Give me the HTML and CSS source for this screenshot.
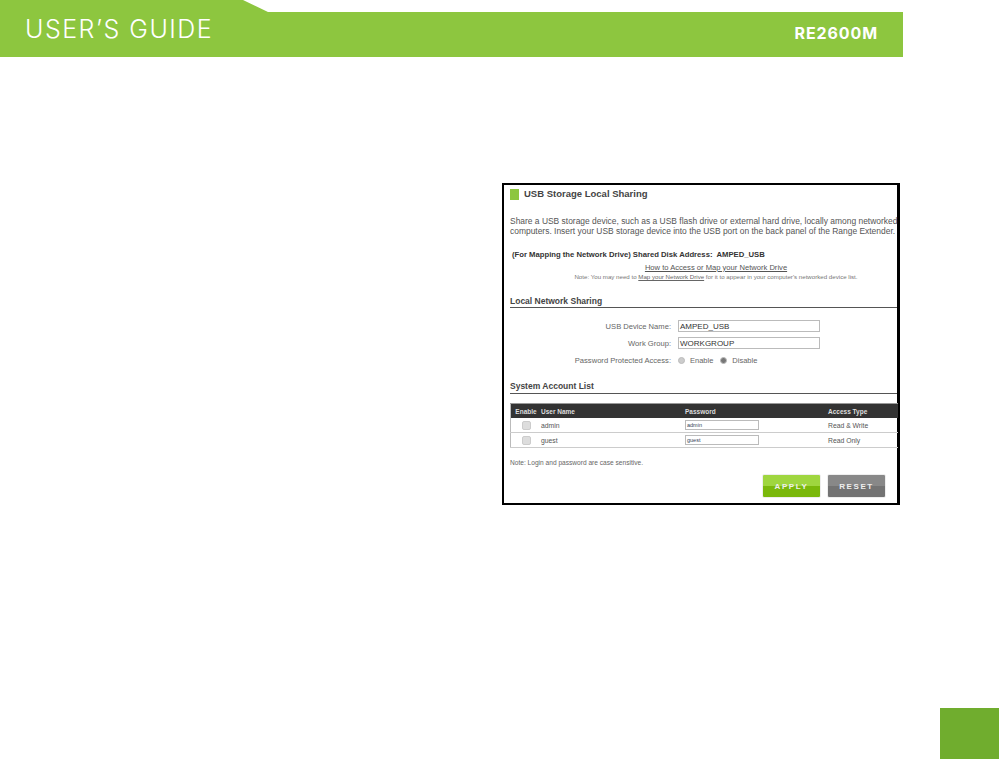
FILE: index.html
```html
<!DOCTYPE html>
<html lang="en">
<head>
    <meta charset="UTF-8">
    <meta name="viewport" content="width=device-width, initial-scale=1.0">
    <title>User's Guide RE2600M</title>
    <link rel="stylesheet" href="styles.css">
</head>
<body>
    <div class="header">
        <div class="guide">USER’S GUIDE</div>
        <div class="model">RE2600M</div>
    </div>

    <div class="shot">
        <h1 class="title"><span class="mark"></span>USB Storage Local Sharing</h1>
        <p class="intro">Share a USB storage device, such as a USB flash drive or external hard drive, locally among networked<br>computers. Insert your USB storage device into the USB port on the back panel of the Range Extender.</p>
        <p class="address">(For Mapping the Network Drive) Shared Disk Address:&nbsp; AMPED_USB</p>
        <div class="howto">
            <a href="#">How to Access or Map your Network Drive</a>
            <small>Note: You may need to <a href="#">Map your Network Drive</a> for it to appear in your computer's networked device list.</small>
        </div>

        <h2 class="section first">Local Network Sharing</h2>
        <div class="fields">
            <label>USB Device Name:</label>
            <div class="box">AMPED_USB</div>
            <label>Work Group:</label>
            <div class="box">WORKGROUP</div>
            <label>Password Protected Access:</label>
            <div class="radios">
                <span class="radio"></span><span>Enable</span>
                <span class="radio on"></span><span>Disable</span>
            </div>
        </div>

        <h2 class="section second">System Account List</h2>
        <table class="accounts">
            <tr>
                <th>Enable</th>
                <th>User Name</th>
                <th>Password</th>
                <th>Access Type</th>
            </tr>
            <tr>
                <td><span class="check"></span></td>
                <td>admin</td>
                <td><div class="pass">admin</div></td>
                <td>Read &amp; Write</td>
            </tr>
            <tr>
                <td><span class="check"></span></td>
                <td>guest</td>
                <td><div class="pass">guest</div></td>
                <td>Read Only</td>
            </tr>
        </table>
        <p class="note">Note: Login and password are case sensitive.</p>
        <div class="actions">
            <button class="apply">APPLY</button>
            <button class="reset">RESET</button>
        </div>
    </div>

    <div class="corner"></div>
</body>
</html>
```

FILE: styles.css
```css
body {
    margin: 0;
    width: 999px;
    height: 759px;
    overflow: hidden;
    display: flex;
    flex-direction: column;
    background-color: white;
    font-family: "Liberation Sans", Arial, sans-serif;
    color: #444;
}

.header {
    width: 903px;
    height: 57px;
    box-sizing: border-box;
    padding: 18px 25px 0 25px;
    display: flex;
    justify-content: space-between;
    background-color: #8DC63F;
    color: white;
    clip-path: polygon(0 0, 243px 0, 268px 12px, 100% 12px, 100% 100%, 0 100%);
}

.guide {
    font-family: "Inter", sans-serif;
    font-size: 25px;
    font-weight: 300;
    line-height: 22px;
    letter-spacing: 1.5px;
}

.model {
    font-family: "Inter", sans-serif;
    font-size: 16px;
    font-weight: 700;
    line-height: 15px;
    margin-top: 8px;
    letter-spacing: 0.9px;
}

.shot {
    width: 398px;
    height: 322px;
    box-sizing: border-box;
    margin: 126px 0 0 502px;
    padding: 3px 0 0 6px;
    border: 2px solid black;
    border-right-width: 3px;
    font-size: 8.45px;
}

.title {
    margin: 0;
    display: flex;
    align-items: center;
    font-size: 9.5px;
    line-height: 12px;
    color: #444;
}

.mark {
    width: 9px;
    height: 11px;
    margin: 0 5px 0 0;
    background-color: #8DC63F;
}

.intro {
    margin: 16px 0 0 0;
    line-height: 10px;
    white-space: nowrap;
    color: #555;
}

.address {
    margin: 13px 0 0 2px;
    font-weight: bold;
    font-size: 7.7px;
    line-height: 12px;
    color: #333;
}

.howto {
    margin-top: 2px;
    padding-left: 64px;
    width: 284px;
    font-size: 7.6px;
    text-align: center;
    line-height: 10px;
}

.howto a {
    color: #555;
}

.howto small {
    display: block;
    font-size: 6.15px;
    line-height: 7px;
    white-space: nowrap;
    color: #777;
}

.howto small a {
    color: #666;
}

.section {
    margin: 0;
    border-bottom: 1px solid #555;
    font-size: 8.5px;
    line-height: 10px;
    color: #444;
}

.section.first {
    margin-top: 16px;
    padding-bottom: 1px;
}

.section.second {
    margin-top: 15px;
    padding-bottom: 2px;
}

.fields {
    display: grid;
    grid-template-columns: 161px 142px;
    column-gap: 7px;
    row-gap: 5px;
    margin-top: 12px;
    align-items: center;
    font-size: 7.6px;
    color: #666;
}

.fields label {
    text-align: right;
}

.box {
    height: 12px;
    box-sizing: border-box;
    border: 1px solid #bbb;
    padding-left: 1px;
    font-size: 8px;
    line-height: 11px;
    color: #333;
}

.radios {
    display: flex;
    align-items: center;
    gap: 5px;
    height: 12px;
    font-size: 7.5px;
}

.radio {
    width: 7px;
    height: 7px;
    box-sizing: border-box;
    border-radius: 50%;
    background-color: #ccc;
    border: 1px solid #bbb;
}

.radio.on {
    margin-left: 2px;
    background-color: #777;
}

.accounts {
    width: 388px;
    margin-top: 9px;
    border-collapse: collapse;
    table-layout: fixed;
    font-size: 6.8px;
}

.accounts th {
    height: 14px;
    padding: 0;
    text-align: left;
    background-color: #333;
    border-top: 1px solid #999;
    color: #ddd;
    font-size: 6.5px;
}

.accounts td {
    height: 14px;
    padding: 0;
    border-bottom: 1px solid #ccc;
    color: #555;
}

.accounts th:first-child,
.accounts td:first-child {
    width: 30px;
    text-align: center;
    border-left: 1px solid #bbb;
}

.accounts th:nth-child(2) {
    width: 144px;
}

.accounts th:nth-child(3) {
    width: 143px;
}

.check {
    display: inline-block;
    width: 7px;
    height: 7px;
    vertical-align: middle;
    background-color: #ddd;
    border: 1px solid #ccc;
    border-radius: 2px;
}

.pass {
    width: 74px;
    height: 10px;
    box-sizing: border-box;
    border: 1px solid #bbb;
    padding-left: 1px;
    font-size: 5.5px;
    line-height: 8px;
    color: #345;
}

.note {
    margin: 10px 0 0 0;
    font-size: 6.6px;
    line-height: 9px;
    color: #666;
}

.actions {
    display: flex;
    justify-content: flex-end;
    gap: 6px;
    margin: 7px 11px 0 0;
}

.actions button {
    width: 59px;
    height: 24px;
    padding: 0;
    border: 1px solid;
    border-radius: 2px;
    color: #eee;
    font-family: inherit;
    font-size: 8px;
    font-weight: bold;
    letter-spacing: 1.6px;
}

.apply {
    background: linear-gradient(#9FD63F 50%, #7AB80B 50%);
    border-color: #8CC63F;
}

.reset {
    background: linear-gradient(#888 50%, #737373 50%);
    border-color: #888;
}

.corner {
    width: 59px;
    height: 51px;
    margin: auto 0 0 auto;
    background-color: #70AD2E;
}
```
